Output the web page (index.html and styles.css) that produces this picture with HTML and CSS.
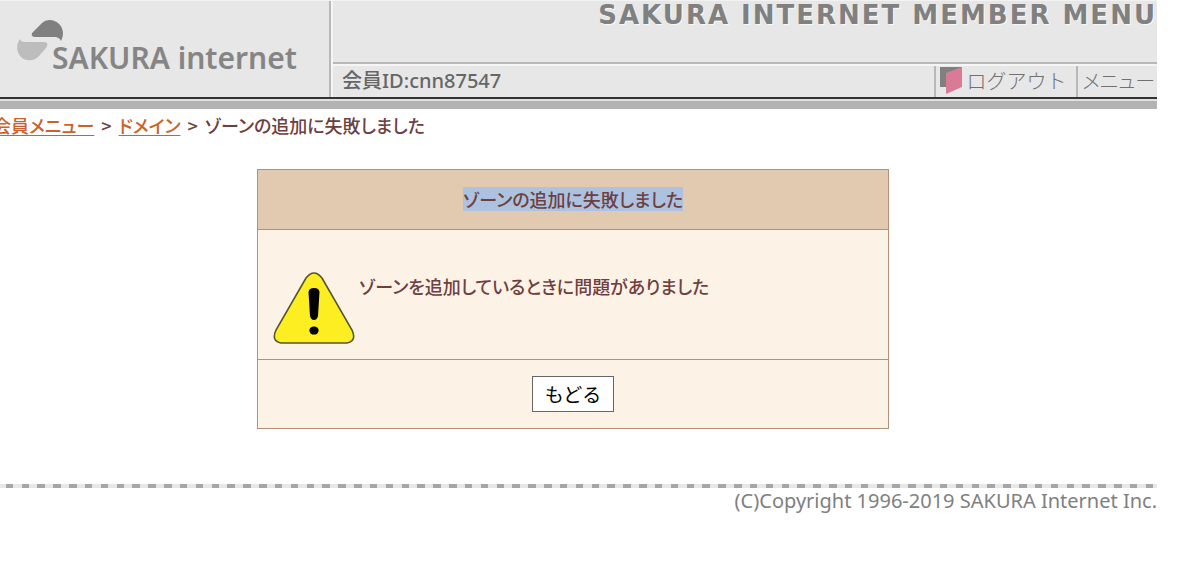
FILE: index.html
```html
<!DOCTYPE html>
<html lang="ja">
<head>
<meta charset="utf-8">
<meta name="viewport" content="width=device-width, initial-scale=1">
<title>SAKURA INTERNET MEMBER MENU</title>
<link rel="stylesheet" href="styles.css">
</head>
<body>
<div class="page">
  <header class="header">
    <div class="brand">
      <svg class="brand-mark" viewBox="0 0 48 42" aria-hidden="true">
        <path fill="#808080" d="M16 12 25 3C29-1 36-1 41 3C47 8 47 15 44 21Q43 18 39 17H18C14 17 14 14 16 12Z"/>
        <path fill="#bdbdbd" d="M3 19Q4 22 8 22H27C31 22 31 25 29 28L22 36C18 41 9 42 4 37C-1 32-1 24 3 19Z"/>
      </svg>
      <span class="brand-name">SAKURA internet</span>
    </div>
    <div class="header-main">
      <h1 class="site-title">SAKURA INTERNET MEMBER MENU</h1>
      <div class="member-bar">
        <p class="member-id">会員ID:cnn87547</p>
        <nav class="member-nav">
          <a class="nav-link" href="#logout">
            <svg class="door" viewBox="0 0 22 28" aria-hidden="true">
              <path fill="#808080" d="M0 1H22V4L6 8V21H0Z"/>
              <path fill="#d97b96" d="M6 7 22 1V21L6 28Z"/>
            </svg>
            <span class="logout-text">ログアウト</span>
          </a>
          <a class="nav-link nav-menu" href="#menu">メニュー</a>
        </nav>
      </div>
    </div>
  </header>
  <nav class="breadcrumb" aria-label="パンくず">
    <a href="#member">会員メニュー</a>
    <span>&gt;</span>
    <a href="#domain">ドメイン</a>
    <span>&gt;</span>
    <span>ゾーンの追加に失敗しました</span>
  </nav>
  <main class="panel">
    <h2 class="panel-title"><mark class="selected">ゾーンの追加に失敗しました</mark></h2>
    <div class="panel-body">
      <svg class="warning" viewBox="0 0 82 72" aria-hidden="true">
        <path fill="#fcee21" stroke="#55552d" stroke-width="1.6" d="M33 6Q41-4 49 6L79 58Q84 69 74 71H8Q-2 69 3 58Z"/>
        <path d="M35.500 20Q36 16 41 16T46.500 20L45 44Q44 48 41 48T37 44Z"/>
        <ellipse cx="41" cy="58.500" rx="4.600" ry="4.100"/>
      </svg>
      <p class="message">ゾーンを追加しているときに問題がありました</p>
    </div>
    <div class="panel-actions"><button class="back" type="button">もどる</button></div>
  </main>
  <footer class="footer">(C)Copyright 1996-2019 SAKURA Internet Inc.</footer>
</div>
</body>
</html>
```
FILE: styles.css
```css
* { box-sizing: border-box; }

body {
  margin: 0;
  background: #fff;
  color: #6d4040;
  font: 500 18px/24px "Noto Sans CJK JP", sans-serif;
  font-feature-settings: "palt";
  overflow-x: hidden;
}

h1, h2, p { margin: 0; }

.page {
  margin: 0 43px 0 -11px;
}

.header {
  display: flex;
  height: 109px;
  background: #e7e7e7;
  border-top: 1px solid #f2f2f2;
  border-bottom: 8px solid #b3b3b3;
  box-shadow: inset 0 -2px #e0e0e0, inset 0 -4px #333;
}

.brand {
  display: flex;
  width: 342px;
  margin-bottom: 4px;
  padding: 19px 0 0 28px;
  border-right: 2px solid #b8b8b8;
}

.brand-mark {
  flex: none;
  width: 48px;
  height: 42px;
}

.brand-name {
  margin: 18px 0 0 -13px;
  color: #858585;
  font: 600 30px/40px "Noto Sans", sans-serif;
  white-space: nowrap;
}

.header-main {
  flex: 1;
  margin-bottom: 4px;
  border-left: 2px solid #f5f5f5;
}

.site-title {
  height: 63px;
  border-bottom: 2px solid #b8b8b8;
  color: #808080;
  font: 700 26px/28px "DejaVu Sans", sans-serif;
  letter-spacing: 2px;
  text-align: right;
  text-shadow: 1px 1px #f8f8f8;
}

.member-bar {
  display: flex;
  justify-content: space-between;
  height: 33px;
  border-top: 2px solid #f5f5f5;
  color: #666;
}

.member-id {
  padding: 1px 0 0 9px;
  font: 500 20px/28px "Noto Sans", "Noto Sans CJK JP", sans-serif;
}

.member-nav { display: flex; }

.nav-link {
  display: flex;
  padding: 0 10px 0 4px;
  border-left: 2px solid #b8b8b8;
  color: #707070;
  font-size: 20px;
  font-weight: 300;
  line-height: 30px;
  text-decoration: none;
}

.nav-menu { padding: 0 2px 0 4px; }

.door {
  width: 22px;
  height: 28px;
  margin-right: 4px;
}

.logout-text { font-feature-settings: normal; }

.breadcrumb {
  display: flex;
  gap: 7px;
  padding: 4px 0 0 4px;
}

.breadcrumb a {
  color: #c9622d;
  text-underline-offset: 2px;
}

.panel {
  max-width: 632px;
  margin: 32px auto 0;
  border: 1px solid #b39179;
  background: #fdf2e6;
}

.panel-title {
  padding: 17px 0 18px;
  border-bottom: 1px solid #b39179;
  background: #e1cab0;
  font-size: 18px;
  font-weight: 500;
  line-height: 24px;
  text-align: center;
}

.selected {
  display: inline-block;
  background: #adc2e0;
  color: inherit;
}

.panel-body {
  display: flex;
  gap: 4px;
  padding: 42px 15px 15px;
  border-bottom: 1px solid #b39179;
}

.warning {
  flex: none;
  width: 82px;
  height: 72px;
}

.message { padding-top: 2px; }

.panel-actions {
  padding: 16px 0;
  text-align: center;
}

.back {
  display: block;
  margin: 0 auto;
  padding: 4px 12px;
  border: 1px solid #666;
  border-radius: 0;
  background: #fff;
  color: #000;
  font: 400 19px/26px "Noto Sans CJK JP", sans-serif;
}

.footer {
  margin-top: 55px;
  padding-top: 4px;
  background: repeating-linear-gradient(90deg, #e7e7e7 0 2%, #a6a6a6 2% 10%, #e7e7e7 10% 16.666%) -1px 0 / 95px 4px repeat-x;
  color: #808080;
  font: 400 20px/26px "Noto Sans", sans-serif;
  text-align: right;
}
```
